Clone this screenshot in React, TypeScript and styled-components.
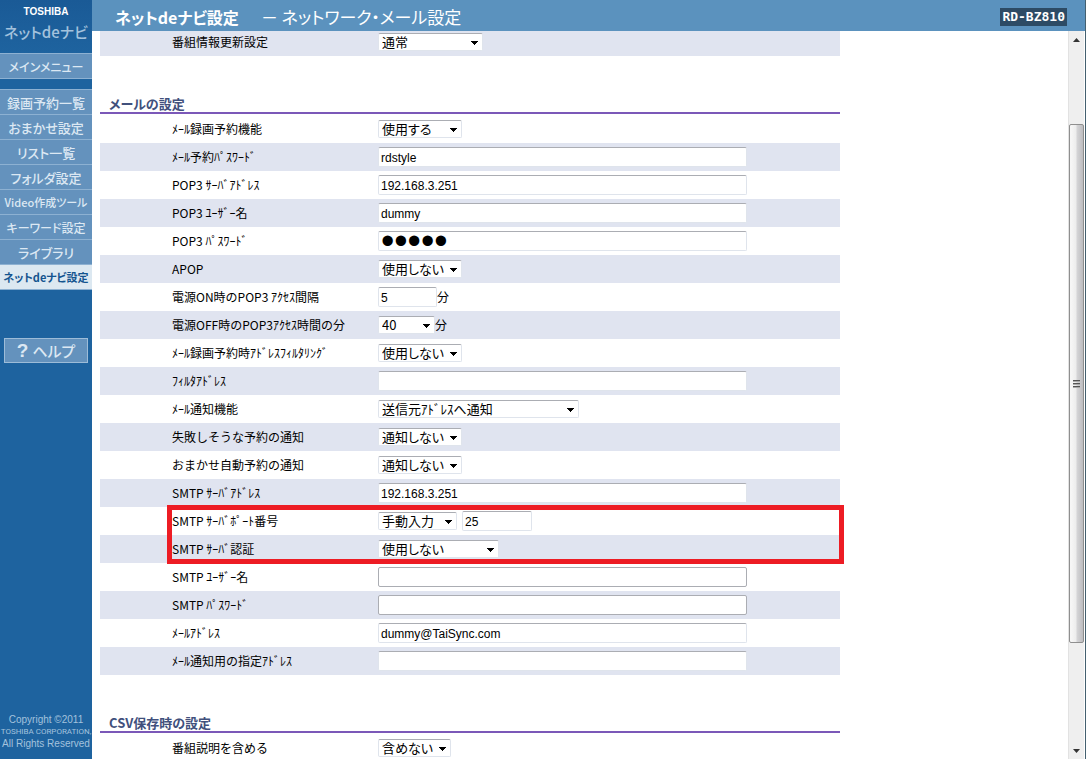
import React from "react";
import styled, { createGlobalStyle, css } from "styled-components";

const GlobalStyle = createGlobalStyle`
  * { box-sizing: border-box; }
  body {
    margin: 0;
    background: #ffffff;
    color: #000000;
    font-family: "Noto Sans CJK JP", sans-serif;
    font-size: 12px;
    line-height: 16px;
  }
`;

const Page = styled.div`
  display: flex;
  height: 100vh;
  overflow: hidden;
  border-right: 1px solid #44606f;
`;

const Sidebar = styled.aside`
  flex: none;
  width: 92px;
  display: flex;
  flex-direction: column;
  background: #1e639f;
  font-feature-settings: "palt";
`;

const Brand = styled.div`
  height: 53px;
  padding-top: 6px;
  text-align: center;
  white-space: nowrap;
  background: linear-gradient(#1a5a96, #1e639f);
`;

const BrandName = styled.div`
  font: bold 10px/12px "Liberation Sans", sans-serif;
  color: #ffffff;
`;

const BrandProduct = styled.div`
  margin-top: 4px;
  font-size: 15px;
  line-height: 20px;
  font-weight: 500;
  color: #a3c2dd;
`;

const Menu = styled.ul`
  list-style: none;
  margin: 0 0 10px;
  padding: 0;
  border-bottom: 1px solid #8db1d2;
`;

const MenuLink = styled.a<{ $active?: boolean; $size?: number }>`
  display: block;
  height: 25px;
  border-top: 1px solid #8db1d2;
  background: ${(p) => (p.$active ? "#dce8f1" : "#6492bd")};
  color: ${(p) => (p.$active ? "#14548f" : "#dce8f3")};
  font-size: ${(p) => p.$size || 13}px;
  line-height: 25px;
  font-weight: ${(p) => (p.$active ? 700 : 500)};
  text-align: center;
  text-decoration: none;
  white-space: nowrap;
`;

const HelpButton = styled.button`
  margin: 38px 4px 0;
  height: 25px;
  padding: 0;
  border: 1px solid #9dbcd8;
  background: #6492bd;
  color: #dce8f3;
  display: flex;
  align-items: center;
  justify-content: center;
  gap: 4px;
  font: 500 15px/20px "Noto Sans CJK JP", sans-serif;
  font-feature-settings: "palt";
`;

const HelpMark = styled.span`
  font: bold 19px/20px "Liberation Sans", sans-serif;
`;

const Copyright = styled.small`
  margin-top: auto;
  padding-bottom: 9px;
  text-align: center;
  white-space: nowrap;
  font: 10px/12px "Liberation Sans", sans-serif;
  color: #a3c2dd;
`;

const Company = styled.span`
  display: block;
  font: 8px/12px Roboto, sans-serif;
`;

const Main = styled.main`
  flex: 1;
  min-width: 0;
  display: flex;
  flex-direction: column;
`;

const Header = styled.header`
  flex: none;
  height: 31px;
  padding: 3px 18px 0 23px;
  display: flex;
  align-items: center;
  background: #5b92be;
  color: #ffffff;
  font-size: 17px;
  line-height: 24px;
  white-space: nowrap;
  font-feature-settings: "palt";
`;

const Title = styled.h1`
  margin: 0 22px 0 0;
  font-size: 16px;
  font-weight: 700;
`;

const Model = styled.span`
  margin-left: auto;
  padding: 0 2px;
  background: #2d4b65;
  font: bold 13px/18px "DejaVu Sans Mono", monospace;
`;

const Body = styled.div`
  flex: 1;
  min-height: 0;
  display: flex;
`;

const Viewport = styled.div`
  flex: 1;
  min-width: 0;
  overflow: hidden;
  padding-left: 8px;
`;

const Form = styled.form`
  max-width: 740px;
  margin-top: -3px;
`;

const SectionTitle = styled.h2`
  margin: 0 0 1px;
  padding: 40px 0 0 9px;
  height: 58px;
  border-bottom: 2px solid #7b58b8;
  color: #41507c;
  font-size: 13px;
  line-height: 16px;
  font-weight: 700;
  font-feature-settings: "palt";
`;

const Row = styled.div<{ $tint?: boolean }>`
  display: flex;
  align-items: center;
  height: 28px;
  padding-left: 72px;
  background: ${(p) => (p.$tint ? "#e0e4f0" : "#ffffff")};
`;

const Label = styled.label`
  flex: none;
  width: 206px;
  white-space: nowrap;
`;

const Controls = styled.div`
  flex: 1;
  display: flex;
  align-items: center;
`;

const field = css`
  border: 1px solid #dfe4ec;
  border-top-color: #abadb3;
  border-radius: 2px;
  background: #ffffff;
  color: #000000;
`;

const TextBox = styled.input<{ $w: number; $plain?: boolean; $gap?: number }>`
  ${field}
  width: ${(p) => p.$w}px;
  height: 20px;
  margin-left: ${(p) => p.$gap || 0}px;
  padding: 2px 2px 0;
  font: 12px/16px "Liberation Sans", sans-serif;
  ${(p) => p.$plain && "border-color: #abadb3;"}
  &[type="password"] {
    padding: 0 2px;
    font-size: 38px;
    line-height: 18px;
  }
`;

const SelectWrap = styled.span<{ $w: number }>`
  position: relative;
  display: block;
  width: ${(p) => p.$w}px;
  height: 18px;
`;

const SelectBox = styled.select`
  ${field}
  appearance: none;
  display: block;
  width: 100%;
  height: 18px;
  padding: 0 16px 0 3px;
  font: 13px/16px "Noto Sans CJK JP", sans-serif;
  font-feature-settings: "palt";
`;

const Arrow = styled.svg`
  position: absolute;
  right: 5px;
  top: 8px;
  pointer-events: none;
`;

const Highlighted = styled.div`
  position: relative;
  &::after {
    content: "";
    position: absolute;
    inset: -2px -4px -1px 67px;
    border: 5px solid #ed1c24;
    pointer-events: none;
    z-index: 1;
  }
`;

const ScrollBar = styled.div`
  flex: none;
  width: 16px;
  margin-right: 1px;
  display: flex;
  flex-direction: column;
  background: #efefef;
  border-left: 1px solid #e2e2e2;
`;

const ScrollEnd = styled.svg`
  flex: none;
  width: 15px;
  height: 17px;
`;

const ScrollGap = styled.div<{ $grow: number }>`
  flex: ${(p) => p.$grow} 0 0;
`;

const ScrollThumb = styled(ScrollGap)`
  border: 1px solid #8f8f8f;
  border-radius: 2px;
  background: linear-gradient(90deg, #f6f6f6 0 10%, #ededed 45%, #d4d4d6 55%, #bdbdc0);
  display: flex;
  align-items: center;
  justify-content: center;
`;

type Part = {
  kind: "text" | "password" | "select";
  value: string;
  w: number;
  plain?: boolean;
  gap?: number;
};
type Item = { id: string; label: string; parts: Part[]; unit?: string };

const text = (value: string, w = 369, extra: Partial<Part> = {}): Part => ({ kind: "text", value, w, ...extra });
const select = (value: string, w = 84): Part => ({ kind: "select", value, w });

const mailItems: Item[] = [
  { id: "mail-rec", label: "ﾒｰﾙ録画予約機能", parts: [select("使用する")] },
  { id: "mail-pass", label: "ﾒｰﾙ予約ﾊﾟｽﾜｰﾄﾞ", parts: [text("rdstyle")] },
  { id: "pop-host", label: "POP3 ｻｰﾊﾞｱﾄﾞﾚｽ", parts: [text("192.168.3.251")] },
  { id: "pop-user", label: "POP3 ﾕｰｻﾞｰ名", parts: [text("dummy")] },
  { id: "pop-pass", label: "POP3 ﾊﾟｽﾜｰﾄﾞ", parts: [{ kind: "password", value: "dummy", w: 369 }] },
  { id: "apop", label: "APOP", parts: [select("使用しない")] },
  { id: "on-interval", label: "電源ON時のPOP3 ｱｸｾｽ間隔", parts: [text("5", 59)], unit: "分" },
  { id: "off-minute", label: "電源OFF時のPOP3ｱｸｾｽ時間の分", parts: [select("40", 57)], unit: "分" },
  { id: "filtering", label: "ﾒｰﾙ録画予約時ｱﾄﾞﾚｽﾌｨﾙﾀﾘﾝｸﾞ", parts: [select("使用しない")] },
  { id: "filter-address", label: "ﾌｨﾙﾀｱﾄﾞﾚｽ", parts: [text("")] },
  { id: "notify", label: "ﾒｰﾙ通知機能", parts: [select("送信元ｱﾄﾞﾚｽへ通知", 201)] },
  { id: "notify-fail", label: "失敗しそうな予約の通知", parts: [select("通知しない")] },
  { id: "notify-auto", label: "おまかせ自動予約の通知", parts: [select("通知しない")] },
  { id: "smtp-host", label: "SMTP ｻｰﾊﾞｱﾄﾞﾚｽ", parts: [text("192.168.3.251")] },
];

const smtpItems: Item[] = [
  { id: "smtp-port", label: "SMTP ｻｰﾊﾞﾎﾟｰﾄ番号", parts: [select("手動入力", 79), text("25", 70, { gap: 5 })] },
  { id: "smtp-auth", label: "SMTP ｻｰﾊﾞ認証", parts: [select("使用しない", 121)] },
];

const accountItems: Item[] = [
  { id: "smtp-user", label: "SMTP ﾕｰｻﾞｰ名", parts: [text("", 369, { plain: true })] },
  { id: "smtp-pass", label: "SMTP ﾊﾟｽﾜｰﾄﾞ", parts: [text("", 369, { plain: true })] },
  { id: "mail-address", label: "ﾒｰﾙｱﾄﾞﾚｽ", parts: [text("dummy@TaiSync.com")] },
  { id: "notify-address", label: "ﾒｰﾙ通知用の指定ｱﾄﾞﾚｽ", parts: [text("")] },
];

const menuItems: { name: string; size?: number }[] = [
  { name: "録画予約一覧" },
  { name: "おまかせ設定" },
  { name: "リスト一覧" },
  { name: "フォルダ設定" },
  { name: "Video作成ツール", size: 11 },
  { name: "キーワード設定", size: 12 },
  { name: "ライブラリ" },
  { name: "ネットdeナビ設定", size: 11 },
];

function Control({ part, id, label }: { part: Part; id: string; label?: string }) {
  if (part.kind === "select") {
    return (
      <SelectWrap $w={part.w}>
        <SelectBox id={id} aria-label={label} defaultValue={part.value}>
          <option>{part.value}</option>
        </SelectBox>
        <Arrow width="7" height="4" viewBox="0 0 7 4" shapeRendering="crispEdges" aria-hidden="true">
          <path d="M0 0H7V1H6V2H5V3H4V4H3V3H2V2H1V1H0Z" fill="#000" />
        </Arrow>
      </SelectWrap>
    );
  }
  return (
    <TextBox
      id={id}
      aria-label={label}
      type={part.kind}
      defaultValue={part.value}
      autoComplete="off"
      $w={part.w}
      $plain={part.plain}
      $gap={part.gap}
    />
  );
}

function Rows({ items, tintFirst = false }: { items: Item[]; tintFirst?: boolean }) {
  return (
    <>
      {items.map((item, i) => (
        <Row key={item.id} $tint={(i % 2 === 0) === tintFirst}>
          <Label htmlFor={item.id}>{item.label}</Label>
          <Controls>
            {item.parts.map((part, n) => (
              <Control
                key={n}
                part={part}
                id={n ? `${item.id}-${n}` : item.id}
                label={n ? item.label : undefined}
              />
            ))}
            {item.unit}
          </Controls>
        </Row>
      ))}
    </>
  );
}

export default function App() {
  return (
    <Page>
      <GlobalStyle />
      <Sidebar>
        <Brand>
          <BrandName>TOSHIBA</BrandName>
          <BrandProduct>ネットdeナビ</BrandProduct>
        </Brand>
        <nav>
          <Menu>
            <li><MenuLink href="#main" $size={12}>メインメニュー</MenuLink></li>
          </Menu>
          <Menu>
            {menuItems.map(({ name, size }, i) => (
              <li key={name}>
                <MenuLink href={`#menu-${i}`} $size={size} $active={i === menuItems.length - 1}>{name}</MenuLink>
              </li>
            ))}
          </Menu>
        </nav>
        <HelpButton type="button"><HelpMark>?</HelpMark>ヘルプ</HelpButton>
        <Copyright>
          Copyright ©2011
          <Company>TOSHIBA CORPORATION,</Company>
          All Rights Reserved
        </Copyright>
      </Sidebar>
      <Main>
        <Header>
          <Title>ネットdeナビ設定</Title>
          <span>－ ネットワーク・メール設定</span>
          <Model>RD-BZ810</Model>
        </Header>
        <Body>
          <Viewport>
            <Form>
              <Rows tintFirst items={[{ id: "guide-update", label: "番組情報更新設定", parts: [select("通常", 105)] }]} />
              <SectionTitle>メールの設定</SectionTitle>
              <Rows items={mailItems} />
              <Highlighted><Rows items={smtpItems} /></Highlighted>
              <Rows items={accountItems} />
              <SectionTitle>CSV保存時の設定</SectionTitle>
              <Rows items={[{ id: "csv-description", label: "番組説明を含める", parts: [select("含めない", 73)] }]} />
            </Form>
          </Viewport>
          <ScrollBar aria-hidden="true">
            <ScrollEnd viewBox="0 0 15 17"><path d="M4 11L7.500 7L11 11Z" fill="#333" /></ScrollEnd>
            <ScrollGap $grow={76} />
            <ScrollThumb $grow={519}>
              <svg width="7" height="8" viewBox="0 0 7 8" shapeRendering="crispEdges">
                <path d="M0 0H7V1H0ZM0 3H7V4H0ZM0 6H7V7H0Z" fill="#555" />
                <path d="M0 1H7V2H0ZM0 4H7V5H0ZM0 7H7V8H0Z" fill="#aaa" />
              </svg>
            </ScrollThumb>
            <ScrollGap $grow={99} />
            <ScrollEnd viewBox="0 0 15 17"><path d="M4 7L7.500 11L11 7Z" fill="#333" /></ScrollEnd>
          </ScrollBar>
        </Body>
      </Main>
    </Page>
  );
}
